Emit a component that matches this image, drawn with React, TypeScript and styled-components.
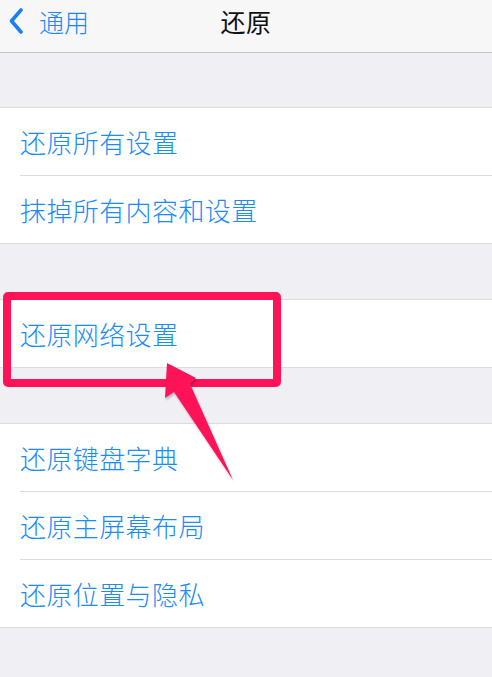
import React from 'react';
import styled, { createGlobalStyle } from 'styled-components';

const GlobalStyle = createGlobalStyle`
  html, body {
    margin: 0;
    padding: 0;
    background: #efeff4;
  }
  body {
    font-family: "Noto Sans CJK SC", "Noto Sans", sans-serif;
  }
`;

const Page = styled.div`
  position: relative;
  width: 492px;
  height: 677px;
  overflow: hidden;
  background: #efeff4;
`;

const NavBar = styled.div`
  height: 53px;
  box-sizing: border-box;
  padding: 1px 9px 0;
  background: #f7f7f8;
  border-bottom: 1px solid #c4c4c8;
  display: grid;
  grid-template-columns: 1fr auto 1fr;
  align-items: start;
`;

const BackButton = styled.div`
  height: 40px;
  display: flex;
  align-items: center;
  gap: 16px;
  color: #1a86f7;
  font-size: 25px;
  font-weight: 300;
`;

const Title = styled.div`
  height: 40px;
  line-height: 40px;
  font-size: 25px;
  color: #111;
  letter-spacing: 0.5px;
`;

const Group = styled.div<{ $gap: number }>`
  margin-top: ${p => p.$gap}px;
  background: #fff;
  border-top: 1px solid #dcdce0;
  border-bottom: 1px solid #dcdce0;
`;

const Row = styled.div`
  height: 67px;
  display: flex;
  align-items: center;
  padding-left: 20px;
  font-size: 26px;
  font-weight: 300;
  letter-spacing: 0.4px;
  color: #1b8bf6;
`;

const Separator = styled.div`
  height: 1px;
  margin-left: 20px;
  background: #dcdce0;
`;

const Highlight = styled.div`
  position: absolute;
  left: 3px;
  top: 292px;
  width: 262px;
  height: 79px;
  border: 8px solid #fe1359;
  border-radius: 5px;
`;

const Arrow = styled.svg`
  position: absolute;
  left: 150px;
  top: 355px;
  filter: drop-shadow(1px 2px 1px rgba(0, 0, 0, 0.25));
`;

const groups = [
  { gap: 54, items: ['还原所有设置', '抹掉所有内容和设置'] },
  { gap: 55, items: ['还原网络设置'] },
  { gap: 55, items: ['还原键盘字典', '还原主屏幕布局', '还原位置与隐私'] },
];

const App = () => (
  <Page>
    <GlobalStyle />
    <NavBar>
      <BackButton>
        <svg width="14" height="26" viewBox="0 0 14 26">
          <path d="M12 2 L2.5 13 L12 24" fill="none" stroke="#1a7ff5" strokeWidth="3.6" strokeLinecap="round" strokeLinejoin="round" />
        </svg>
        <span>通用</span>
      </BackButton>
      <Title>还原</Title>
      <div />
    </NavBar>
    {groups.map((g, gi) => (
      <Group key={gi} $gap={g.gap}>
        {g.items.map((label, i) => (
          <React.Fragment key={label}>
            {i > 0 && <Separator />}
            <Row>{label}</Row>
          </React.Fragment>
        ))}
      </Group>
    ))}
    {/* annotation drawn over the screenshot */}
    <Highlight />
    <Arrow width="100" height="130" viewBox="0 0 100 130">
      <polygon points="17,8 46,23 40,29 83,125 24,37 15,43" fill="#fe1359" />
    </Arrow>
  </Page>
);

export default App;
